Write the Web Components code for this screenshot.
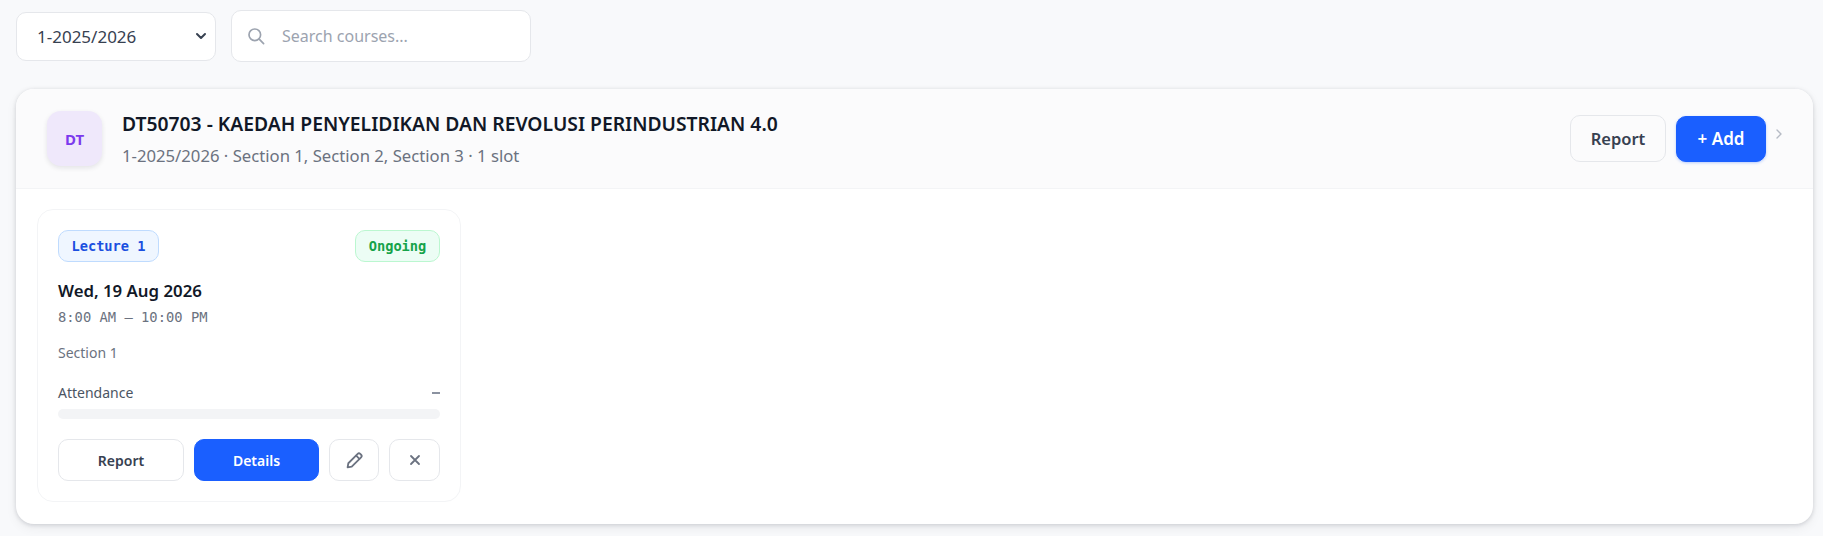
<!DOCTYPE html>
<html lang="en">
<head>
<meta charset="utf-8">
<title>Courses</title>
<style>
  html, body { margin: 0; height: 100%; }
  body {
    background: #f8f9fb;
    color: #111827;
    font-family: "Noto Sans", "Open Sans", sans-serif;
  }
</style>
</head>
<body>
<course-page>
  <course-toolbar slot="toolbar" term="1-2025/2026" placeholder="Search courses..."></course-toolbar>
  <course-panel code="DT" title="DT50703 - KAEDAH PENYELIDIKAN DAN REVOLUSI PERINDUSTRIAN 4.0" meta="1-2025/2026 · Section 1, Section 2, Section 3 · 1 slot">
    <slot-card kind="Lecture 1" status="Ongoing" date="Wed, 19 Aug 2026" time="8:00 AM — 10:00 PM" section="Section 1"></slot-card>
  </course-panel>
</course-page>

<script>
class CoursePage extends HTMLElement {
  constructor() {
    super();
    this.attachShadow({ mode: 'open' }).innerHTML = `
      <style>
        :host { display: block; box-sizing: border-box; padding: 10px 10px 13px 16px; }
        .main { margin-top: 27px; }
      </style>
      <slot name="toolbar"></slot>
      <div class="main"><slot></slot></div>
    `;
  }
}
customElements.define('course-page', CoursePage);

class CourseToolbar extends HTMLElement {
  constructor() {
    super();
    const term = this.getAttribute('term');
    const placeholder = this.getAttribute('placeholder');
    this.attachShadow({ mode: 'open' }).innerHTML = `
      <style>
        :host { display: flex; align-items: center; gap: 15px; }
        .select {
          align-items: center;
          background: #fff;
          border: 1px solid #e5e7eb;
          border-radius: 10px;
          box-sizing: border-box;
          color: #374151;
          display: flex;
          font-size: 17px;
          height: 49px;
          justify-content: space-between;
          padding: 0 6px 0 20px;
          width: 200px;
        }
        .search {
          align-items: center;
          background: #fff;
          border: 1px solid #e5e7eb;
          border-radius: 10px;
          box-sizing: border-box;
          color: #9ca3af;
          display: flex;
          font-size: 16px;
          gap: 17px;
          height: 52px;
          padding: 0 15px;
          width: 300px;
        }
        svg { display: block; flex: none; }
      </style>
      <div class="select">
        <span>${term}</span>
        <svg width="16" height="16" viewBox="0 0 16 16" fill="none" stroke="#374151" stroke-width="2" stroke-linecap="round" stroke-linejoin="round"><path d="M4 6l4 4 4-4"/></svg>
      </div>
      <div class="search">
        <svg width="18" height="18" viewBox="0 0 18 18" fill="none" stroke="#9ca3af" stroke-width="1.7" stroke-linecap="round"><circle cx="7.8" cy="7.8" r="5.8"/><path d="M12.2 12.2l4.4 4.4"/></svg>
        <span>${placeholder}</span>
      </div>
    `;
  }
}
customElements.define('course-toolbar', CourseToolbar);

class UiButton extends HTMLElement {
  constructor() {
    super();
    this.attachShadow({ mode: 'open' }).innerHTML = `
      <style>
        :host {
          align-items: center;
          background: var(--btn-bg, transparent);
          border: 1px solid var(--btn-border, #e5e7eb);
          border-radius: var(--btn-radius, 10px);
          box-sizing: border-box;
          color: var(--btn-color, #374151);
          cursor: pointer;
          display: inline-flex;
          font-size: var(--btn-size, 14px);
          font-weight: 600;
          justify-content: center;
        }
        :host([primary]) {
          background: #1a5fff;
          border-color: #1a5fff;
          color: #fff;
        }
      </style>
      <slot></slot>
    `;
  }
}
customElements.define('ui-button', UiButton);

class CoursePanel extends HTMLElement {
  constructor() {
    super();
    this.attachShadow({ mode: 'open' }).innerHTML = `
      <style>
        :host {
          background: #fff;
          border-radius: 18px;
          box-shadow: 0 1px 4px rgba(17, 24, 39, .16), 0 4px 12px rgba(17, 24, 39, .06);
          display: block;
          overflow: hidden;
        }
        .head {
          align-items: center;
          background: #fbfbfc;
          border-bottom: 1px solid #f3f4f6;
          box-sizing: border-box;
          display: flex;
          height: 100px;
          padding: 0 29px 0 31px;
        }
        .avatar {
          align-items: center;
          background: #efe8fb;
          border-radius: 14px;
          box-shadow: 0 2px 5px rgba(17, 24, 39, .1);
          color: #7c3aed;
          display: flex;
          flex: none;
          font-size: 15px;
          font-weight: 700;
          height: 55px;
          justify-content: center;
          margin-right: 20px;
          width: 55px;
        }
        .text { flex: 1; min-width: 0; padding-top: 2px; }
        h2 { color: #111827; font-size: 19.3px; font-weight: 600; line-height: 26px; margin: 0 0 7px; }
        p { color: #6b7280; font-size: 16.7px; line-height: 24px; margin: 0; }
        .actions { align-items: center; display: flex; gap: 10px; }
        .report { --btn-size: 16.5px; height: 47px; width: 96px; }
        .add { --btn-size: 17px; box-shadow: 0 1px 3px rgba(26, 95, 255, .3); height: 46px; width: 90px; }
        .chev { display: block; margin: -9px 0 0 8px; }
        .body { padding: 20px 21px 22px; }
      </style>
      <div class="head">
        <div class="avatar">${this.getAttribute('code')}</div>
        <div class="text">
          <h2>${this.getAttribute('title')}</h2>
          <p>${this.getAttribute('meta')}</p>
        </div>
        <div class="actions">
          <ui-button class="report">Report</ui-button>
          <ui-button class="add" primary>+ Add</ui-button>
        </div>
        <svg class="chev" width="10" height="12" viewBox="0 0 10 12" fill="none" stroke="#b6bbc5" stroke-width="1.4" stroke-linecap="round" stroke-linejoin="round"><path d="M3 2l4 4-4 4"/></svg>
      </div>
      <div class="body"><slot></slot></div>
    `;
  }
}
customElements.define('course-panel', CoursePanel);

class SlotCard extends HTMLElement {
  constructor() {
    super();
    const attr = (n) => this.getAttribute(n);
    this.attachShadow({ mode: 'open' }).innerHTML = `
      <style>
        :host {
          background: #fff;
          border: 1px solid #f3f4f6;
          border-radius: 16px;
          box-sizing: border-box;
          display: block;
          height: 293px;
          padding: 20px;
          width: 424px;
        }
        .top { align-items: center; display: flex; justify-content: space-between; }
        .pill {
          align-items: center;
          border-radius: 10px;
          box-sizing: border-box;
          display: flex;
          font-family: "DejaVu Sans Mono", "Liberation Mono", monospace;
          font-size: 13.7px;
          font-weight: 700;
          height: 32px;
          justify-content: center;
        }
        .kind { background: #eff6ff; border: 1px solid #bfdbfe; color: #1a4fe0; width: 101px; }
        .status { background: #ecfdf5; border: 1px solid #bbf7d0; color: #16a34a; width: 85px; }
        .date { color: #111827; font-size: 16.8px; font-weight: 600; line-height: 24px; margin-top: 17px; }
        .time { color: #6b7280; font-family: "DejaVu Sans Mono", "Liberation Mono", monospace; font-size: 13.8px; line-height: 20px; margin-top: 4px; }
        .section { color: #6b7280; font-size: 14px; line-height: 20px; margin-top: 16px; }
        .att { align-items: center; color: #4b5563; display: flex; font-size: 14px; justify-content: space-between; line-height: 20px; margin-top: 20px; }
        .dash { background: #8b92a0; display: block; height: 2px; width: 8px; }
        .bar { background: #f3f4f6; border-radius: 5px; height: 10px; margin-top: 6px; }
        .btns { display: grid; gap: 10px; grid-template-columns: 126px 125px 50px 51px; margin-top: 20px; }
        .btns ui-button { height: 42px; }
        svg { display: block; }
      </style>
      <div class="top">
        <span class="pill kind">${attr('kind')}</span>
        <span class="pill status">${attr('status')}</span>
      </div>
      <div class="date">${attr('date')}</div>
      <div class="time">${attr('time')}</div>
      <div class="section">${attr('section')}</div>
      <div class="att"><span>Attendance</span><span class="dash"></span></div>
      <div class="bar"></div>
      <div class="btns">
        <ui-button>Report</ui-button>
        <ui-button primary>Details</ui-button>
        <ui-button aria-label="Edit">
          <svg width="17" height="17" viewBox="0 0 16 16" fill="none" stroke="#6b7280" stroke-width="1.7" stroke-linejoin="round" stroke-linecap="round"><path d="M11 1.8a1.7 1.7 0 0 1 2.4 0l.8.8a1.7 1.7 0 0 1 0 2.4L5.4 13.8 1.5 14.5l.7-3.9z"/><path d="M9.6 3.4l3 3"/></svg>
        </ui-button>
        <ui-button aria-label="Remove">
          <svg width="12" height="12" viewBox="0 0 12 12" fill="none" stroke="#6b7280" stroke-width="1.8" stroke-linecap="round"><path d="M2 2l8 8M10 2l-8 8"/></svg>
        </ui-button>
      </div>
    `;
  }
}
customElements.define('slot-card', SlotCard);
</script>
</body>
</html>
